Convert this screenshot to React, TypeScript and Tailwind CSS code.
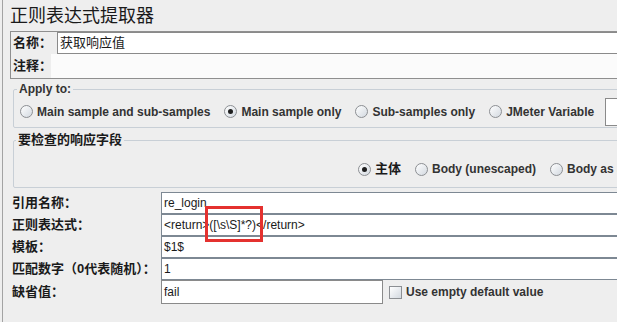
import React from "react";

function Radio({ checked = false }: { checked?: boolean }) {
  return (
    <span className="w-[13px] h-[13px] rounded-full border border-[#8c8f93] bg-gradient-to-br from-white to-[#d3d9e0] flex items-center justify-center shrink-0">
      {checked && <span className="w-[5px] h-[5px] rounded-full bg-[#1e1e1e]" />}
    </span>
  );
}

function Option({ label, checked = false }: { label: string; checked?: boolean }) {
  return (
    <label className="flex items-center gap-[4px] text-[12px] font-bold text-[#333] whitespace-nowrap">
      <Radio checked={checked} />
      <span>{label}</span>
    </label>
  );
}

const fields = [
  { label: "引用名称：", value: "re_login" },
  { label: "正则表达式：", value: "<return>([\\s\\S]*?)</return>" },
  { label: "模板：", value: "$1$" },
  { label: "匹配数字（0代表随机）：", value: "1" },
];

export default function App() {
  return (
    <div className="w-[617px] h-[322px] overflow-hidden bg-[#eeeeee] text-[#1a1a1a] font-['Liberation_Sans','Noto_Sans_CJK_SC',sans-serif]">
      <div className="h-full ml-[2px] border-l border-[#a3a3a3] pl-[7px] pt-[4px]">
        {/* title */}
        <h1 className="text-[18px] leading-[24px] font-normal">正则表达式提取器</h1>

        {/* name / comment */}
        <div className="mt-[3px] w-[640px] border border-[#8f8f8f]">
          <div className="flex h-[22px] items-center">
            <span className="w-[46px] shrink-0 pl-[2px] text-[13px] font-bold whitespace-nowrap">名称：</span>
            <div className="flex-1 h-[22px] border border-[#8a8a8a] bg-white text-[13px] leading-[20px] pl-[2px]">获取响应值</div>
          </div>
          <div className="flex h-[24px] items-center">
            <span className="w-[40px] shrink-0 pl-[2px] text-[13px] font-bold whitespace-nowrap">注释：</span>
            <div className="flex-1 h-full bg-[#fbfbfb]" />
          </div>
        </div>

        {/* apply to */}
        <fieldset className="mt-[3px] ml-[3px] w-[640px] border border-[#c8cfd6] rounded-[2px]">
          <legend className="ml-[3px] px-[2px] text-[12px] leading-[14px] font-bold text-[#333]">Apply to:</legend>
          <div className="flex items-center h-[31px] pl-[6px] gap-[14px]">
            <Option label="Main sample and sub-samples" />
            <Option label="Main sample only" checked />
            <Option label="Sub-samples only" />
            <Option label="JMeter Variable" />
            <div className="w-[40px] h-[28px] border border-[#8a8a8a] bg-white shrink-0 -ml-[3px]" />
          </div>
        </fieldset>

        {/* field to check */}
        <fieldset className="mt-[5px] ml-[3px] w-[640px] border border-[#c8cfd6] rounded-[2px]">
          <legend className="ml-[2px] px-[2px] text-[13px] leading-[14px] font-bold">要检查的响应字段</legend>
          <div className="flex items-center h-[40px] pt-[4px] pl-[344px] gap-[14px] whitespace-nowrap">
            <label className="flex items-center gap-[4px] text-[13px] font-bold">
              <Radio checked />
              <span>主体</span>
            </label>
            <Option label="Body (unescaped)" />
            <Option label="Body as a Document" />
          </div>
        </fieldset>

        {/* extractor fields */}
        <div className="relative mt-[4px]">
          {fields.map((f) => (
            <div key={f.label} className="flex h-[22px] items-center">
              <span className="w-[151px] shrink-0 pl-[2px] text-[13px] font-bold whitespace-nowrap">{f.label}</span>
              <div className="w-[470px] shrink-0 h-[22px] border border-[#7d8893] bg-white text-[12px] leading-[20px] pl-[2px]">{f.value}</div>
            </div>
          ))}
          <div className="flex h-[24px] items-center">
            <span className="w-[151px] shrink-0 pl-[2px] text-[13px] font-bold whitespace-nowrap">缺省值：</span>
            <div className="w-[222px] shrink-0 h-[24px] border border-[#8a8a8a] bg-white text-[12px] leading-[22px] pl-[2px]">fail</div>
            <span className="ml-[6px] w-[13px] h-[13px] shrink-0 border border-[#8c8f93] bg-gradient-to-br from-white to-[#d3d9e0]" />
            <span className="ml-[4px] text-[12px] font-bold text-[#333] whitespace-nowrap">Use empty default value</span>
          </div>

          {/* annotation */}
          <div className="absolute left-[195px] top-[14px] w-[58px] h-[36px] border-[3px] border-[#e4312f]" />
        </div>
      </div>
    </div>
  );
}
